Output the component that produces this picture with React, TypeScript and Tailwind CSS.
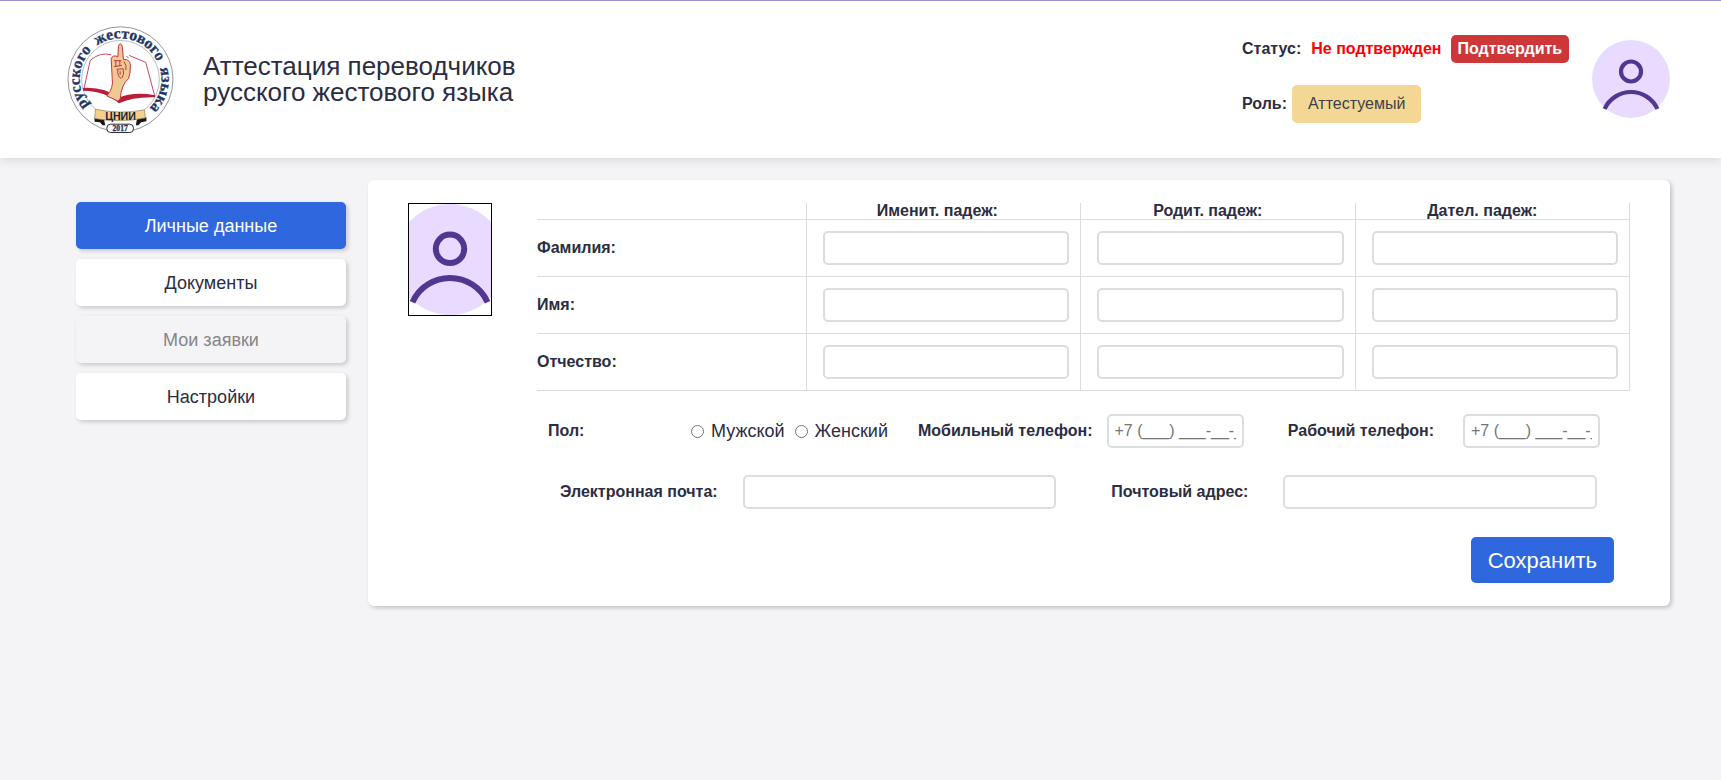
import React from "react";

function Logo() {
  return (
    <svg viewBox="48 69 328 336" className="h-[112px] w-[109px] shrink-0" role="img" aria-label="ЦНИИ русского жестового языка">
      <circle cx="212" cy="238" r="158" fill="#fff" stroke="#7d7f8c" strokeWidth="2.5" />
      <circle cx="212" cy="238" r="117" fill="none" stroke="#9a9ba6" strokeWidth="2" />
      <path id="logo-arc" d="M118 317 A123 123 0 1 1 306 317" fill="none" />
      <g fill="#1f3763" fontFamily="Liberation Serif, serif" fontWeight="700" fontSize="47" stroke="#1f3763" strokeWidth="1">
        <text><textPath href="#logo-arc" startOffset="0">русского</textPath></text>
        <text><textPath href="#logo-arc" startOffset="205">жестового</textPath></text>
        <text><textPath href="#logo-arc" startOffset="438">языка</textPath></text>
      </g>
      <path d="M102 266 L121 181 Q150 158 186 163 L212 180 L232 166 L288 188 L315 288 L212 292 Z" fill="#fff" />
      <path d="M102 266 L121 181 Q150 155 184 164 M230 168 L236 174 M238 166 L288 187 L315 288" fill="none" stroke="#cf4560" strokeWidth="3" />
      <path d="M99 264 Q165 260 206 294 Q250 274 316 286 L316 292 Q250 290 207 310 Q170 274 99 272 Z" fill="#b81f38" />
      <path d="M171 288 Q192 262 187 236 L184 176 Q188 163 204 170 L206 138 Q211 124 217 138 L221 178 Q240 176 242 196 Q242 222 236 236 Q214 254 211 298 L204 303 Z" fill="#f0c891" stroke="#c03548" strokeWidth="3" strokeLinejoin="round" />
      <path d="M192 182 H214 M198 182 V200 M210 180 V198 M192 200 L216 196 M200 208 L220 206 M204 210 Q202 228 214 236 M220 206 Q224 226 216 234 M211 214 V224 M222 184 Q232 196 228 210" fill="none" stroke="#c03548" strokeWidth="3" />
      <path d="M134 352 L162 356 L166 376 L158 376 L150 367 L134 366 Z M290 352 L262 356 L258 376 L266 376 L274 367 L290 364 Z" fill="#16161c" />
      <path d="M137 328 Q210 344 284 330 L287 354 Q212 370 134 356 Z" fill="#f3d08b" stroke="#8d7a55" strokeWidth="2" />
      <text x="212" y="359" textAnchor="middle" fontFamily="Liberation Sans, sans-serif" fontWeight="700" fontSize="32" fill="#1c2440">ЦНИИ</text>
      <rect x="171" y="373" width="80" height="25" rx="11" fill="#fff" stroke="#26293a" strokeWidth="3" />
      <text x="211" y="393" textAnchor="middle" fontFamily="Liberation Serif, serif" fontWeight="700" fontSize="23" fill="#1f3763" stroke="#1f3763">2017</text>
    </svg>
  );
}

function Avatar({ className }: { className: string }) {
  return (
    <svg viewBox="0 0 78 78" preserveAspectRatio="xMidYMid slice" className={className} aria-hidden="true">
      <circle cx="39" cy="39" r="39" fill="#e9dbff" />
      <circle cx="39" cy="31.5" r="10" fill="none" stroke="#51378f" strokeWidth="4.2" />
      <path d="M12.6 69 A29 29 0 0 1 65.4 69" fill="none" stroke="#51378f" strokeWidth="4.2" />
    </svg>
  );
}

const menu = [
  { title: "Личные данные", style: "bg-[#2f67df] text-white" },
  { title: "Документы", style: "bg-white" },
  { title: "Мои заявки", style: "bg-[#f4f4f6] text-[#858585]", disabled: true },
  { title: "Настройки", style: "bg-white" },
];
const cases = [
  { title: "Именит. падеж:", pad: "pr-3" },
  { title: "Родит. падеж:", pad: "pr-5" },
  { title: "Дател. падеж:", pad: "pr-5" },
];
const nameRows = ["Фамилия:", "Имя:", "Отчество:"];

const field =
  "h-[34px] min-w-0 rounded-[5px] border-2 border-[#dcdddf] bg-white px-1.5 text-base text-[#2b2d42] outline-none placeholder:text-[#757575]";

export default function App() {
  return (
    <div className="min-h-screen bg-[#f4f4f6] font-['Liberation_Sans',Arial,sans-serif] text-base text-[#2b2d42]">
      <header className="flex h-[158px] items-center border-t border-[#a08fd0] bg-white pr-[51px] pb-[2px] pl-[66px] shadow-[0_2px_10px_rgba(0,0,0,0.12)]">
        <Logo />
        <h1 className="ml-7 text-[26px] leading-[26px]">
          Аттестация переводчиков
          <br />
          русского жестового языка
        </h1>
        <div className="ml-auto flex w-[328px] flex-col gap-[22px] whitespace-nowrap">
          <div className="flex items-center font-bold">
            <span>Статус:</span>
            <span className="ml-[10px] text-[#ff0000]">Не подтвержден</span>
            <button type="button" className="ml-[9px] h-7 rounded-[5px] bg-[#ce3737] px-[7px] text-white">Подтвердить</button>
          </div>
          <div className="flex items-center">
            <b>Роль:</b>
            <span className="ml-[5px] rounded-[5px] bg-[#f4d794] px-4 py-[7px] text-[#3f3f46]">Аттестуемый</span>
          </div>
        </div>
        <Avatar className="ml-[22px] size-[78px] shrink-0" />
      </header>

      <div className="flex items-start gap-[22px] pt-[22px] pr-[51px] pl-[76px]">
        <nav className="mt-[22px] flex w-[270px] shrink-0 flex-col gap-[10px]">
          {menu.map((m) => (
            <button
              key={m.title}
              type="button"
              disabled={m.disabled}
              className={`h-[47px] rounded-[5px] text-lg shadow-[2px_2px_4px_rgba(0,0,0,0.18)] ${m.style}`}
            >
              {m.title}
            </button>
          ))}
        </nav>

        <main className="flex min-w-0 flex-1 items-start gap-[45px] rounded-[6px] bg-white pt-[23px] pr-[40px] pb-[23px] pl-[40px] shadow-[2px_2px_4px_rgba(0,0,0,0.2)]">
          <div className="h-[113px] w-[84px] shrink-0 border border-black">
            <Avatar className="size-full" />
          </div>
          <form className="min-w-0 flex-1" onSubmit={(e) => e.preventDefault()}>
            <table className="w-full table-fixed border-collapse">
              <thead>
                <tr className="h-4 border-b border-[#dcdcde]">
                  <td className="w-[269px] border-r border-[#dcdcde]" />
                  {cases.map((c) => (
                    <th key={c.title} scope="col" className={`border-r border-[#dcdcde] leading-4 ${c.pad}`}>{c.title}</th>
                  ))}
                </tr>
              </thead>
              <tbody>
                {nameRows.map((r) => (
                  <tr key={r} className="h-[57px] border-b border-[#dcdcde]">
                    <th scope="row" className="border-r border-[#dcdcde] text-left">{r}</th>
                    {cases.map((c) => (
                      <td key={c.title} className="border-r border-[#dcdcde] pr-[11px] pl-4">
                        <input type="text" aria-label={`${r} ${c.title}`} className={`block w-full ${field}`} />
                      </td>
                    ))}
                  </tr>
                ))}
              </tbody>
            </table>

            <div className="mt-[23px] flex items-center pr-[30px] pl-[11px]">
              <fieldset className="flex items-center text-lg">
                <legend className="float-left w-[143px] text-base font-bold">Пол:</legend>
                <label className="flex items-center gap-[7px]">
                  <input type="radio" name="sex" className="size-[13px]" />
                  Мужской
                </label>
                <label className="ml-2.5 flex items-center gap-[7px]">
                  <input type="radio" name="sex" className="size-[13px]" />
                  Женский
                </label>
              </fieldset>
              <label htmlFor="mobile" className="ml-[30px] font-bold">Мобильный телефон:</label>
              <input id="mobile" type="tel" placeholder="+7 (___) ___-__-__" className={`ml-[14px] w-[137px] ${field}`} />
              <label htmlFor="work" className="ml-auto font-bold">Рабочий телефон:</label>
              <input id="work" type="tel" placeholder="+7 (___) ___-__-__" className={`ml-[29px] w-[137px] ${field}`} />
            </div>

            <div className="mt-[27px] flex items-center pr-[33px] pl-[23px]">
              <label htmlFor="email" className="shrink-0 font-bold">Электронная почта:</label>
              <input id="email" type="email" className={`ml-[25px] w-0 flex-1 ${field}`} />
              <label htmlFor="address" className="ml-[55px] shrink-0 font-bold">Почтовый адрес:</label>
              <input id="address" type="text" className={`ml-[35px] w-0 flex-1 ${field}`} />
            </div>

            <div className="mt-7 flex justify-end pr-4">
              <button type="submit" className="h-[46px] rounded-[5px] bg-[#2f67df] px-[17px] text-[22px] text-white">Сохранить</button>
            </div>
          </form>
        </main>
      </div>
    </div>
  );
}
